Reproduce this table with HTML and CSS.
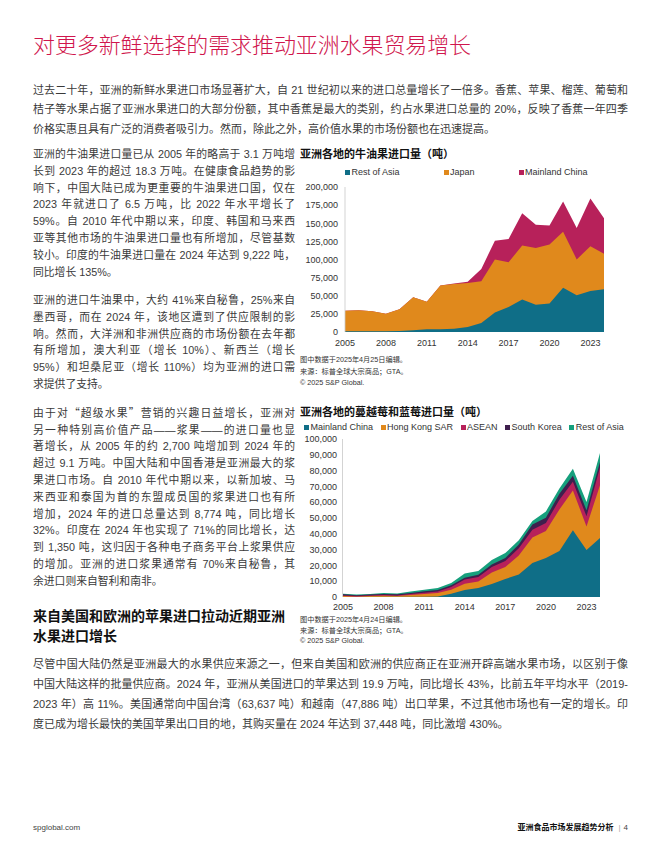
FILE: index.html
```html
<!DOCTYPE html>
<html lang="zh-CN">
<head>
<meta charset="utf-8">
<title>亚洲食品市场发展趋势分析</title>
<link rel="stylesheet" href="styles.css">
</head>
<body>
<div class="page">
  <h1 class="title">对更多新鲜选择的需求推动亚洲水果贸易增长</h1>

  <p class="wide-p lead">
    <span class="ln">过去二十年，亚洲的新鲜水果进口市场显著扩大，自 21 世纪初以来的进口总量增长了一倍多。香蕉、苹果、榴莲、葡萄和</span>
    <span class="ln">桔子等水果占据了亚洲水果进口的大部分份额，其中香蕉是最大的类别，约占水果进口总量的 20%，反映了香蕉一年四季</span>
    <span class="ln-last">价格实惠且具有广泛的消费者吸引力。然而，除此之外，高价值水果的市场份额也在迅速提高。</span>
  </p>

  <section class="row row-1">
    <div class="col-text">
      <p class="col-p">
        <span class="ln">亚洲的牛油果进口量已从 2005 年的略高于 3.1 万吨增</span>
        <span class="ln">长到 2023 年的超过 18.3 万吨。在健康食品趋势的影</span>
        <span class="ln">响下，中国大陆已成为更重要的牛油果进口国，仅在</span>
        <span class="ln">2023 年就进口了 6.5 万吨，比 2022 年水平增长了</span>
        <span class="ln">59%。自 2010 年代中期以来，印度、韩国和马来西</span>
        <span class="ln">亚等其他市场的牛油果进口量也有所增加，尽管基数</span>
        <span class="ln">较小。印度的牛油果进口量在 2024 年达到 9,222 吨，</span>
        <span class="ln-last">同比增长 135%。</span>
      </p>
      <p class="col-p">
        <span class="ln">亚洲的进口牛油果中，大约 41%来自秘鲁，25%来自</span>
        <span class="ln">墨西哥，而在 2024 年，该地区遭到了供应限制的影</span>
        <span class="ln">响。然而，大洋洲和非洲供应商的市场份额在去年都</span>
        <span class="ln">有所增加，澳大利亚（增长 10%）、新西兰（增长</span>
        <span class="ln">95%）和坦桑尼亚（增长 110%）均为亚洲的进口需</span>
        <span class="ln-last">求提供了支持。</span>
      </p>
    </div>

    <figure class="chart chart-avocado">
      <h3 class="chart-title">亚洲各地的牛油果进口量（吨）</h3>
      <ul class="legend legend-avocado">
        <li><i class="sw sw-teal"></i>Rest of Asia</li>
        <li><i class="sw sw-orange"></i>Japan</li>
        <li><i class="sw sw-crimson"></i>Mainland China</li>
      </ul>
      <svg class="plot" width="328" height="176" viewBox="0 0 328 176">
        <polygon class="a-crimson" points="45,132.7 58.6,132.3 72.3,133.3 85.9,135.7 99.5,131.3 113.2,119.3 126.8,123.7 140.4,107.6 154.1,105.6 167.7,103.7 181.3,90.9 194.9,62.7 208.6,61.0 222.2,35.3 235.8,46.7 249.5,47.6 263.1,23.4 276.7,50.0 290.4,20.6 304,40.2 304,154 45,154"/>
        <polygon class="a-orange" points="45,132.7 58.6,132.3 72.3,133.3 85.9,135.7 99.5,131.3 113.2,119.3 126.8,123.7 140.4,107.6 154.1,106.0 167.7,105.0 181.3,103.3 194.9,81.4 208.6,84.3 222.2,67.4 235.8,70.0 249.5,66.6 263.1,53.7 276.7,81.4 290.4,68.3 304,75.7 304,154 45,154"/>
        <polygon class="a-teal" points="45,153.3 58.6,153.3 72.3,153.3 85.9,153.3 99.5,153.0 113.2,152.3 126.8,151.3 140.4,151.3 154.1,150.7 167.7,149.0 181.3,145.0 194.9,134.6 208.6,129.0 222.2,121.4 235.8,126.7 249.5,125.4 263.1,109.7 276.7,117.3 290.4,113.0 304,111.3 304,154 45,154"/>
        <line class="axis" x1="45" y1="9" x2="45" y2="154"/>
        <g class="ylab">
          <text x="38" y="12.2">200,000</text>
          <text x="38" y="30.3">175,000</text>
          <text x="38" y="48.5">150,000</text>
          <text x="38" y="66.6">125,000</text>
          <text x="38" y="84.7">100,000</text>
          <text x="38" y="102.8">75,000</text>
          <text x="38" y="121.0">50,000</text>
          <text x="38" y="139.1">25,000</text>
          <text x="38" y="157.2">0</text>
        </g>
        <g class="xlab">
          <text x="45" y="168.3">2005</text>
          <text x="85.9" y="168.3">2008</text>
          <text x="126.8" y="168.3">2011</text>
          <text x="167.7" y="168.3">2014</text>
          <text x="208.6" y="168.3">2017</text>
          <text x="249.5" y="168.3">2020</text>
          <text x="290.4" y="168.3">2023</text>
        </g>
      </svg>
      <div class="notes notes-avocado">
        <p>图中数据于2025年4月25日编辑。</p>
        <p>来源：标普全球大宗商品；GTA。</p>
        <p>© 2025 S&amp;P Global.</p>
      </div>
    </figure>
  </section>

  <section class="row row-2">
    <div class="col-text">
      <p class="col-p">
        <span class="ln">由于对<span class="cjk">“</span>超级水果<span class="cjk">”</span>营销的兴趣日益增长，亚洲对</span>
        <span class="ln">另一种特别高价值产品——浆果——的进口量也显</span>
        <span class="ln">著增长，从 2005 年的约 2,700 吨增加到 2024 年的</span>
        <span class="ln">超过 9.1 万吨。中国大陆和中国香港是亚洲最大的浆</span>
        <span class="ln">果进口市场。自 2010 年代中期以来，以新加坡、马</span>
        <span class="ln">来西亚和泰国为首的东盟成员国的浆果进口也有所</span>
        <span class="ln">增加，2024 年的进口总量达到 8,774 吨，同比增长</span>
        <span class="ln">32%。印度在 2024 年也实现了 71%的同比增长，达</span>
        <span class="ln">到 1,350 吨，这归因于各种电子商务平台上浆果供应</span>
        <span class="ln">的增加。亚洲的进口浆果通常有 70%来自秘鲁，其</span>
        <span class="ln-last">余进口则来自智利和南非。</span>
      </p>
      <h2 class="section-heading">来自美国和欧洲的苹果进口拉动近期亚洲水果进口增长</h2>
    </div>

    <figure class="chart chart-berry">
      <h3 class="chart-title">亚洲各地的蔓越莓和蓝莓进口量（吨）</h3>
      <ul class="legend legend-berry">
        <li><i class="sw sw-teal"></i>Mainland China</li>
        <li><i class="sw sw-orange"></i>Hong Kong SAR</li>
        <li><i class="sw sw-crimson"></i>ASEAN</li>
        <li><i class="sw sw-purple"></i>South Korea</li>
        <li><i class="sw sw-green"></i>Rest of Asia</li>
      </ul>
      <svg class="plot" width="328" height="182" viewBox="0 0 328 182">
        <polygon class="a-green" points="43,160.7 56.5,161.6 70.1,161.0 83.6,160.1 97.1,160.4 110.6,158.6 124.2,156.7 137.7,155.0 151.2,149.9 164.7,140.6 178.3,137.9 191.8,127.0 205.3,120.1 218.8,107.3 232.4,88.0 245.9,78.4 259.4,55.6 272.9,35.7 286.5,69.0 300,20.1 300,164 43,164"/>
        <polygon class="a-purple" points="43,161.3 56.5,162.3 70.1,161.6 83.6,161.0 97.1,161.3 110.6,160.1 124.2,158.3 137.7,157.0 151.2,152.3 164.7,144.7 178.3,141.7 191.8,131.6 205.3,125.0 218.8,111.4 232.4,91.6 245.9,84.7 259.4,60.7 272.9,42.7 286.5,77.3 300,29.1 300,164 43,164"/>
        <polygon class="a-crimson" points="43,162.4 56.5,163.1 70.1,162.4 83.6,161.9 97.1,162.4 110.6,161.0 124.2,159.7 137.7,158.6 151.2,154.0 164.7,146.6 178.3,143.9 191.8,134.0 205.3,128.0 218.8,115.3 232.4,96.7 245.9,90.1 259.4,66.7 272.9,48.7 286.5,83.3 300,34.6 300,164 43,164"/>
        <polygon class="a-orange" points="43,163.1 56.5,163.7 70.1,163.1 83.6,162.7 97.1,163.1 110.6,161.9 124.2,161.0 137.7,160.1 151.2,156.7 164.7,150.7 178.3,148.4 191.8,139.4 205.3,134.0 218.8,122.6 232.4,104.6 245.9,98.0 259.4,76.6 272.9,57.4 286.5,93.4 300,52.3 300,164 43,164"/>
        <polygon class="a-teal" points="43,164 124.2,163.8 137.7,163.5 151.2,160.7 164.7,157.0 178.3,155.0 191.8,151.0 205.3,146.0 218.8,141.4 232.4,130.0 245.9,125.0 259.4,118.0 272.9,97.3 286.5,117.1 300,105.1 300,164"/>
        <line class="axis" x1="42.5" y1="6" x2="42.5" y2="164"/>
        <g class="ylab">
          <text x="37" y="9.2">100,000</text>
          <text x="37" y="25.0">90,000</text>
          <text x="37" y="40.8">80,000</text>
          <text x="37" y="56.6">70,000</text>
          <text x="37" y="72.4">60,000</text>
          <text x="37" y="88.2">50,000</text>
          <text x="37" y="104.0">40,000</text>
          <text x="37" y="119.8">30,000</text>
          <text x="37" y="135.6">20,000</text>
          <text x="37" y="151.4">10,000</text>
          <text x="37" y="167.2">0</text>
        </g>
        <g class="xlab">
          <text x="43" y="177.3">2005</text>
          <text x="83.6" y="177.3">2008</text>
          <text x="124.2" y="177.3">2011</text>
          <text x="164.7" y="177.3">2014</text>
          <text x="205.3" y="177.3">2017</text>
          <text x="245.9" y="177.3">2020</text>
          <text x="286.5" y="177.3">2023</text>
        </g>
      </svg>
      <div class="notes notes-berry">
        <p>图中数据于2025年4月24日编辑。</p>
        <p>来源：标普全球大宗商品；GTA。</p>
        <p>© 2025 S&amp;P Global.</p>
      </div>
    </figure>
  </section>

  <p class="wide-p closing">
    <span class="ln">尽管中国大陆仍然是亚洲最大的水果供应来源之一，但来自美国和欧洲的供应商正在亚洲开辟高端水果市场，以区别于像</span>
    <span class="ln">中国大陆这样的批量供应商。2024 年，亚洲从美国进口的苹果达到 19.9 万吨，同比增长 43%，比前五年平均水平（2019-</span>
    <span class="ln">2023 年）高 11%。美国通常向中国台湾（63,637 吨）和越南（47,886 吨）出口苹果，不过其他市场也有一定的增长。印</span>
    <span class="ln-last">度已成为增长最快的美国苹果出口目的地，其购买量在 2024 年达到 37,448 吨，同比激增 430%。</span>
  </p>

  <footer class="footer">
    <span class="site">spglobal.com</span>
    <span class="doc"><b>亚洲食品市场发展趋势分析</b><span class="bar">|</span>4</span>
  </footer>
</div>
</body>
</html>
```

FILE: styles.css
```css
html, body {
  margin: 0;
  padding: 0;
  background: #ffffff;
}

body {
  font-family: "Liberation Sans", "Noto Sans CJK SC", sans-serif;
  color: #3a3a3a;
}

.page {
  width: 662px;
  box-sizing: border-box;
  padding: 32px 34px 0 33px;
}

.title {
  margin: 0;
  font-size: 22px;
  line-height: 28px;
  font-weight: 300;
  color: #d0164d;
  letter-spacing: -0.1px;
}

.wide-p {
  margin: 0;
  font-size: 11px;
  line-height: 19.6px;
}

.lead {
  margin-top: 20.7px;
}

.closing {
  margin-top: 7.5px;
  line-height: 20px;
}

.ln {
  display: block;
  text-align: justify;
  text-align-last: justify;
}

.ln-last {
  display: block;
  text-align: left;
}

.cjk {
  font-family: "Noto Sans CJK SC", sans-serif;
}

.row {
  display: grid;
  grid-template-columns: 262px 1fr;
  column-gap: 5px;
  align-items: start;
}

.row-1 {
  margin-top: 6.6px;
}

.row-2 {
  margin-top: 11px;
}

.col-p {
  margin: 0;
  font-size: 10.8px;
  line-height: 16.8px;
}

.col-p + .col-p {
  margin-top: 11.6px;
}

.section-heading {
  margin: 17.5px 0 0;
  font-size: 14px;
  line-height: 19.5px;
  font-weight: 700;
  color: #111111;
}

.chart {
  margin: 0;
}

.chart-title {
  margin: 0;
  font-size: 11px;
  line-height: 16.8px;
  font-weight: 700;
  color: #111111;
}

.legend {
  display: flex;
  margin: 0;
  padding: 0;
  list-style: none;
  font-size: 9px;
  line-height: 12px;
  color: #333333;
}

.legend li {
  display: flex;
  align-items: center;
  white-space: nowrap;
}

.legend-avocado {
  margin-top: 3.6px;
  padding-left: 45px;
  gap: 44px;
}

.legend-berry {
  margin-top: 0.8px;
  padding-left: 4px;
  gap: 7.5px;
}

.sw {
  display: inline-block;
  width: 5px;
  height: 5px;
  margin-right: 1.5px;
}

.sw-teal { background: #0f6e87; }
.sw-orange { background: #e0891c; }
.sw-crimson { background: #b7215a; }
.sw-purple { background: #3f1f4e; }
.sw-green { background: #16a07d; }

.plot {
  display: block;
}

.a-teal { fill: #0f6e87; }
.a-orange { fill: #e0891c; }
.a-crimson { fill: #b7215a; }
.a-purple { fill: #3f1f4e; }
.a-green { fill: #16a07d; }

.axis {
  stroke: #c8c8c8;
  stroke-width: 0.8;
}

.ylab text {
  font-family: "Liberation Sans", sans-serif;
  font-size: 9px;
  fill: #333333;
  text-anchor: end;
}

.xlab text {
  font-family: "Liberation Sans", sans-serif;
  font-size: 9px;
  fill: #333333;
  text-anchor: middle;
}

.notes p {
  margin: 0;
  font-size: 7.2px;
  color: #333333;
}

.notes-avocado p {
  line-height: 11.2px;
}

.notes-berry p {
  line-height: 10.5px;
}

.footer {
  display: flex;
  justify-content: space-between;
  align-items: center;
  margin-top: 88px;
  font-size: 8px;
  line-height: 12px;
  color: #444444;
}

.doc b {
  font-weight: 700;
  color: #111111;
}

.doc .bar {
  margin: 0 3px 0 5px;
  color: #aaaaaa;
}
```
